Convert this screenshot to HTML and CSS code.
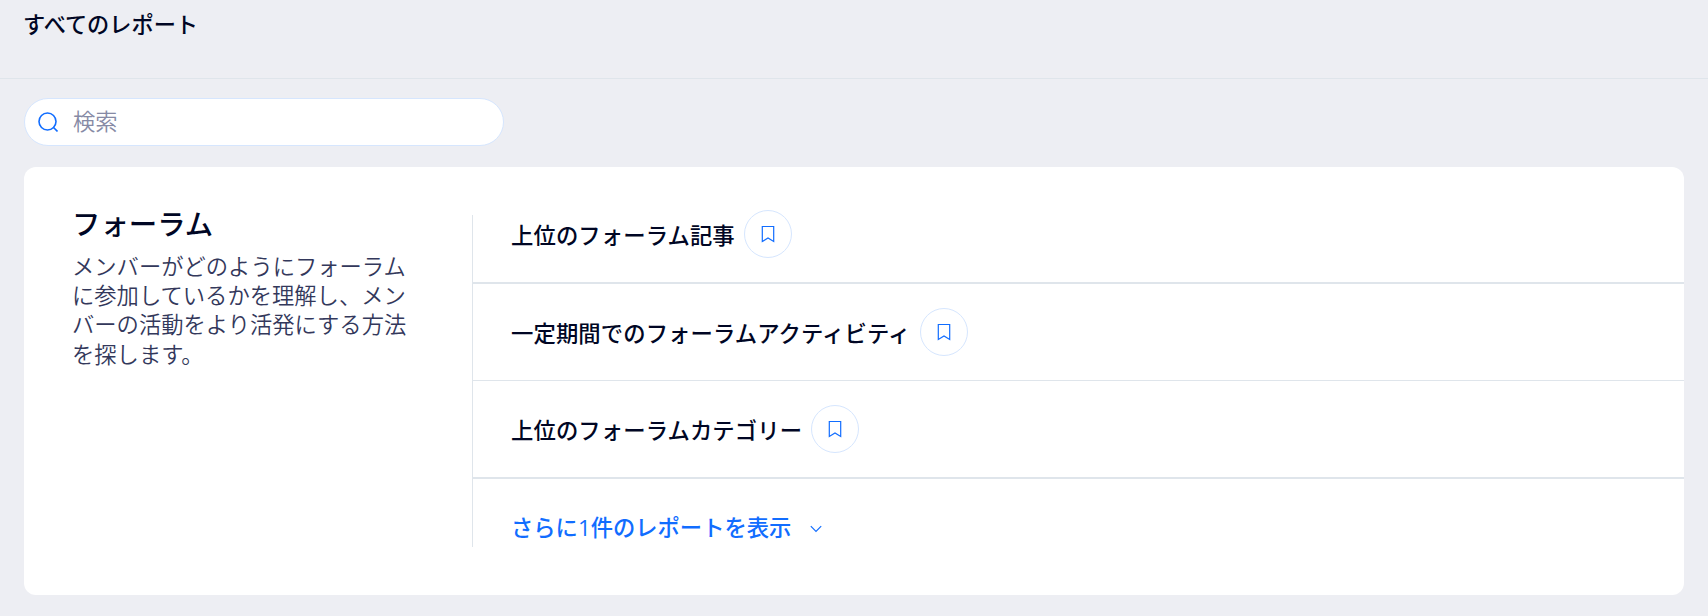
FILE: index.html
```
<!DOCTYPE html>
<html lang="ja">
<head>
  <meta charset="UTF-8">
  <title>すべてのレポート</title>
  <link rel="stylesheet" href="styles.css">
</head>
<body>
<header class="header">
  <h1 class="header-title">すべてのレポート</h1>
</header>
<main class="main">
  <label class="search">
    <svg class="search-icon" width="20" height="20" viewBox="0 0 20 20"><circle cx="9.5" cy="9.5" r="8.5"/><path d="M15.3 15.3l4.2 4.2"/></svg>
    <input class="search-input" type="text" placeholder="検索">
  </label>
  <section class="card">
    <div class="intro">
      <h2 class="intro-title">フォーラム</h2>
      <p class="intro-text">メンバーがどのようにフォーラムに参加しているかを理解し、メンバーの活動をより活発にする方法を探します。</p>
    </div>
    <div class="list">
      <div class="row row-first">
        <span class="row-title">上位のフォーラム記事</span>
        <button class="bookmark"><svg width="14" height="18" viewBox="0 0 14 18"><path d="M1.3 1.5h11.4v15L7 12.9l-5.7 3.6z"/></svg></button>
      </div>
      <div class="row">
        <span class="row-title">一定期間でのフォーラムアクティビティ</span>
        <button class="bookmark"><svg width="14" height="18" viewBox="0 0 14 18"><path d="M1.3 1.5h11.4v15L7 12.9l-5.7 3.6z"/></svg></button>
      </div>
      <div class="row row-third">
        <span class="row-title">上位のフォーラムカテゴリー</span>
        <button class="bookmark"><svg width="14" height="18" viewBox="0 0 14 18"><path d="M1.3 1.5h11.4v15L7 12.9l-5.7 3.6z"/></svg></button>
      </div>
      <a class="more">
        <span>さらに<span class="more-count">1</span>件のレポートを表示</span>
        <svg class="more-icon" width="12" height="8" viewBox="0 0 12 8"><path d="M.8 1.2L6 6.4l5.2-5.2"/></svg>
      </a>
    </div>
  </section>
</main>
</body>
</html>
```
FILE: styles.css
```
* {
  box-sizing: border-box;
}
body {
  margin: 0;
  height: 616px;
  overflow: hidden;
  background-color: #edeef3;
  color: #000624;
  font-family: "Noto Sans CJK JP", sans-serif;
  font-size: 22.3px;
}
h1, h2, p {
  margin: 0;
}
svg {
  display: block;
  fill: none;
  stroke: #116dff;
  stroke-width: 1.2;
}
.header {
  height: 79px;
  padding: 7px 23px 0;
  border-bottom: 1px solid #dfe5eb;
}
.header-title {
  font-size: 22.2px;
  font-weight: 500;
  line-height: 32px;
}
.main {
  padding: 19px 24px 0;
}
.search {
  display: flex;
  align-items: center;
  width: 480px;
  height: 48px;
  padding: 0 13px;
  border: 1px solid #d6e6fe;
  border-radius: 24px;
  background-color: #fff;
}
.search-icon {
  flex: none;
  margin-top: -1px;
  stroke-width: 1.6;
}
.search-input {
  width: 400px;
  margin: -5px 0 0 15px;
  padding: 0;
  border: 0;
  outline: 0;
  background: none;
  font: inherit;
  font-weight: 350;
  line-height: 32px;
}
.search-input::placeholder {
  color: #868aa5;
}
.card {
  display: flex;
  height: 428px;
  margin-top: 21px;
  padding: 48px 0;
  border-radius: 12px;
  background-color: #fff;
}
.intro {
  width: 448px;
  padding: 0 60px 0 48px;
  margin-top: -12px;
}
.intro-title {
  font-size: 28.4px;
  font-weight: 500;
  line-height: 40px;
}
.intro-text {
  margin-top: 8px;
  color: #33385b;
  font-weight: 350;
  line-height: 29.2px;
}
.list {
  flex: 1;
  border-left: 1px solid #dfe5eb;
}
.row {
  display: flex;
  align-items: center;
  height: 97px;
  padding-left: 38px;
  border-bottom: 1px solid #dfe5eb;
}
.row-first {
  height: 69px;
  padding-bottom: 29px;
  border-bottom-width: 2px;
}
.row-third {
  height: 98px;
  border-bottom-width: 2px;
}
.row-title {
  font-weight: 500;
  font-size: 22.35px;
  letter-spacing: .1px;
  line-height: 32px;
}
.bookmark {
  display: flex;
  align-items: center;
  justify-content: center;
  width: 48px;
  height: 48px;
  margin-left: 9px;
  padding: 0;
  border: 1px solid #d6e6fe;
  border-radius: 50%;
  background: none;
}
.more {
  display: flex;
  align-items: center;
  height: 95px;
  padding-left: 38px;
  color: #116dff;
  font-weight: 500;
}
.more-count {
  font-family: "Open Sans", sans-serif;
}
.more-icon {
  margin: 4px 0 0 19px;
}
```
